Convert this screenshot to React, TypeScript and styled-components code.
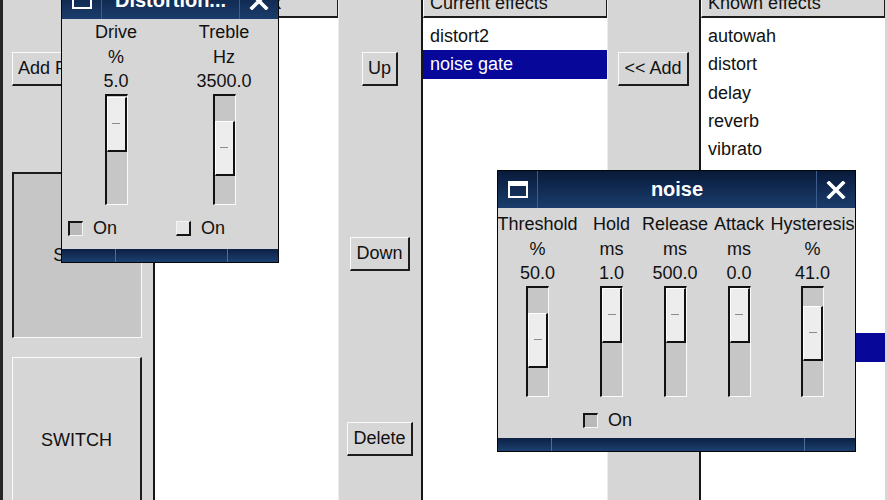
import React from "react";
import styled, { createGlobalStyle } from "styled-components";

const Global = createGlobalStyle`
  html, body { margin: 0; padding: 0; background: #d6d6d6; overflow: hidden; }
  body { font-family: "Liberation Sans", Arial, sans-serif; font-size: 18px; color: #111; }
  * { box-sizing: border-box; }
`;

const Screen = styled.div`
  position: relative;
  width: 888px;
  height: 500px;
  overflow: hidden;
  background: #d6d6d6;
`;

const MainRow = styled.div`
  display: flex;
  height: 540px;
  margin-top: -11px;
  border-left: 3px solid #262626;
`;

const LeftCol = styled.div`
  width: 150px;
  display: flex;
  flex-direction: column;
  align-items: flex-start;
  padding-left: 9px;
`;

const GrayCol = styled.div<{ $w: number }>`
  width: ${(p) => p.$w}px;
  display: flex;
  flex-direction: column;
  align-items: center;
  padding-top: 63px;
  gap: 151px;
  border-left: 1px solid #ececec;
`;

const Btn = styled.div<{ $mt?: number }>`
  height: 34px;
  margin-top: ${(p) => p.$mt ?? 0}px;
  padding: 0 5px;
  line-height: 31px;
  white-space: nowrap;
  background: #d6d6d6;
  border-style: solid;
  border-width: 1px 2px 2px 1px;
  border-color: #fafafa #1c1c1c #1c1c1c #fafafa;
`;

const BigToggle = styled.div<{ $pressed?: boolean; $mt: number; $h: number }>`
  width: 130px;
  height: ${(p) => p.$h}px;
  margin-top: ${(p) => p.$mt}px;
  display: flex;
  align-items: center;
  justify-content: center;
  background: ${(p) => (p.$pressed ? "#c6c6c6" : "#d6d6d6")};
  border-style: solid;
  border-width: ${(p) => (p.$pressed ? "2px 1px 1px 2px" : "1px 2px 2px 1px")};
  border-color: ${(p) =>
    p.$pressed ? "#1c1c1c #fafafa #fafafa #1c1c1c" : "#fafafa #1c1c1c #1c1c1c #fafafa"};
`;

const ListBox = styled.div<{ $w: number }>`
  width: ${(p) => p.$w}px;
  display: flex;
  flex-direction: column;
  background: #fff;
  border-left: 2px solid #161616;
`;

const ListHeader = styled.div`
  height: 29px;
  flex: none;
  display: flex;
  align-items: center;
  padding-left: 6px;
  white-space: nowrap;
  overflow: hidden;
  background: #d6d6d6;
  border-style: solid;
  border-width: 1px 1px 2px 1px;
  border-color: #fafafa #1c1c1c #1c1c1c #fafafa;
`;

const ListBody = styled.div`
  padding-top: 4px;
  display: flex;
  flex-direction: column;
`;

const ListItem = styled.div<{ $sel?: boolean }>`
  height: 28.3px;
  line-height: 28.3px;
  padding-left: 7px;
  white-space: nowrap;
  background: ${(p) => (p.$sel ? "#07079a" : "transparent")};
  color: ${(p) => (p.$sel ? "#fff" : "#111")};
`;

const RightGap = styled.div`
  width: 3px;
`;

/* ---------- floating windows ---------- */

const Win = styled.div<{ $x: number; $y: number; $w: number }>`
  position: absolute;
  left: ${(p) => p.$x}px;
  top: ${(p) => p.$y}px;
  width: ${(p) => p.$w}px;
  display: flex;
  flex-direction: column;
  border: 1px solid #050505;
  background: #d6d6d6;
`;

const TitleBar = styled.div`
  height: 37px;
  display: flex;
  color: #fff;
  background: linear-gradient(#091a3a, #1a3d6c);
`;

const TitleIconCell = styled.div`
  width: 40px;
  display: flex;
  align-items: center;
  justify-content: center;
  border-right: 1px solid #3d5e8c;
`;

const TitleText = styled.div`
  flex: 1;
  text-align: center;
  font-weight: bold;
  font-size: 20px;
  line-height: 37px;
  white-space: nowrap;
  overflow: hidden;
`;

const CloseCell = styled.div`
  width: 39px;
  display: flex;
  align-items: center;
  justify-content: center;
  border-left: 1px solid #3d5e8c;
`;

const WinBody = styled.div<{ $cols: string; $pt: number }>`
  height: 230px;
  display: grid;
  grid-template-columns: ${(p) => p.$cols};
  grid-template-rows: auto auto;
  align-content: start;
  padding-top: ${(p) => p.$pt}px;
`;

const ParamCol = styled.div`
  display: flex;
  flex-direction: column;
  align-items: center;
  min-width: 0;
`;

const ParamLine = styled.div`
  height: 24.5px;
  line-height: 24.5px;
  white-space: nowrap;
`;

const Trough = styled.div`
  margin-top: 0;
  width: 23px;
  height: 111px;
  display: flex;
  flex-direction: column;
  background: #c6c6c6;
  border-style: solid;
  border-width: 2px 1px 1px 2px;
  border-color: #111 #fafafa #fafafa #111;
`;

const Thumb = styled.div<{ $off: number }>`
  margin-top: ${(p) => p.$off}px;
  height: 55px;
  display: flex;
  align-items: center;
  justify-content: center;
  background: #ededed;
  border-style: solid;
  border-width: 1px 2px 2px 1px;
  border-color: #fff #111 #111 #fff;
`;

const Grip = styled.div`
  width: 8px;
  height: 1px;
  background: #8c8c8c;
`;

const CheckCell = styled.div<{ $col?: number }>`
  grid-column: ${(p) => p.$col ?? "auto"};
  grid-row: 2;
  margin-top: 12px;
  height: 24px;
  padding-left: 6px;
  display: flex;
  align-items: center;
  gap: 10px;
`;

const CheckBox = styled.div<{ $on?: boolean }>`
  width: 15px;
  height: 15px;
  background: ${(p) => (p.$on ? "#b9b9b9" : "#e6e6e6")};
  border-style: solid;
  border-width: ${(p) => (p.$on ? "2px 1px 1px 2px" : "1px 2px 2px 1px")};
  border-color: ${(p) =>
    p.$on ? "#151515 #f4f4f4 #f4f4f4 #151515" : "#f4f4f4 #151515 #151515 #f4f4f4"};
`;

const BottomBar = styled.div`
  height: 13px;
  display: flex;
  background: linear-gradient(#0c2044, #1c406e);
`;

const BarSeg = styled.div<{ $w?: number }>`
  width: ${(p) => (p.$w ? `${p.$w}px` : "auto")};
  flex: ${(p) => (p.$w ? "none" : 1)};
  & + & {
    border-left: 1px solid #4a6d9c;
  }
`;

const WinIcon = () => (
  <svg width="20" height="17" viewBox="0 0 20 17">
    <rect x="1" y="1" width="18" height="15" fill="none" stroke="#fff" strokeWidth="2" />
    <rect x="0" y="0" width="20" height="5" fill="#fff" />
  </svg>
);

const CloseIcon = () => (
  <svg width="20" height="18" viewBox="0 0 20 18">
    <path d="M3 2 L17 16 M17 2 L3 16" stroke="#fff" strokeWidth="3.6" strokeLinecap="square" />
  </svg>
);

type Param = { label: string; unit: string; value: string; off: number };

const Slider = ({ off }: { off: number }) => (
  <Trough>
    <Thumb $off={off}>
      <Grip />
    </Thumb>
  </Trough>
);

const ParamColumn = ({ p }: { p: Param }) => (
  <ParamCol>
    <ParamLine>{p.label}</ParamLine>
    <ParamLine>{p.unit}</ParamLine>
    <ParamLine>{p.value}</ParamLine>
    <Slider off={p.off} />
  </ParamCol>
);

const FxWindow = ({
  x,
  y,
  w,
  title,
  children,
}: {
  x: number;
  y: number;
  w: number;
  title: string;
  children: React.ReactNode;
}) => (
  <Win $x={x} $y={y} $w={w}>
    <TitleBar>
      <TitleIconCell>
        <WinIcon />
      </TitleIconCell>
      <TitleText>{title}</TitleText>
      <CloseCell>
        <CloseIcon />
      </CloseCell>
    </TitleBar>
    {children}
    <BottomBar>
      <BarSeg $w={53} />
      <BarSeg />
      <BarSeg $w={51} />
    </BottomBar>
  </Win>
);

const distParams: Param[] = [
  { label: "Drive", unit: "%", value: "5.0", off: 1 },
  { label: "Treble", unit: "Hz", value: "3500.0", off: 25 },
];

const noiseParams: Param[] = [
  { label: "Threshold", unit: "%", value: "50.0", off: 25 },
  { label: "Hold", unit: "ms", value: "1.0", off: 0 },
  { label: "Release", unit: "ms", value: "500.0", off: 0 },
  { label: "Attack", unit: "ms", value: "0.0", off: 0 },
  { label: "Hysteresis", unit: "%", value: "41.0", off: 18 },
];

const current = ["distort2", "noise gate"];
const known = [
  "autowah",
  "distort",
  "delay",
  "reverb",
  "vibrato",
  "chorus",
  "flanger",
  "phaser",
  "tremolo",
  "echo",
  "compressor",
  "noise gate",
  "tubeamp",
];

export default function App() {
  return (
    <Screen>
      <Global />
      <MainRow>
        <LeftCol>
          <Btn $mt={63}>Add FX</Btn>
          <BigToggle $pressed $mt={86} $h={166}>
            STOP
          </BigToggle>
          <BigToggle $mt={19} $h={168}>
            SWITCH
          </BigToggle>
        </LeftCol>

        <ListBox $w={185}>
          <ListHeader>Presets in rack</ListHeader>
          <ListBody />
        </ListBox>

        <GrayCol $w={83}>
          <Btn>Up</Btn>
          <Btn>Down</Btn>
          <Btn>Delete</Btn>
        </GrayCol>

        <ListBox $w={186}>
          <ListHeader>Current effects</ListHeader>
          <ListBody>
            {current.map((c, i) => (
              <ListItem key={c} $sel={i === 1}>
                {c}
              </ListItem>
            ))}
          </ListBody>
        </ListBox>

        <GrayCol $w={92}>
          <Btn>&lt;&lt; Add</Btn>
        </GrayCol>

        <ListBox $w={186}>
          <ListHeader>Known effects</ListHeader>
          <ListBody>
            {known.map((k, i) => (
              <ListItem key={k + i} $sel={i === 11}>
                {k}
              </ListItem>
            ))}
          </ListBody>
        </ListBox>
        <RightGap />
      </MainRow>

      <FxWindow x={61} y={-19} w={218} title="Distortion...">
        <WinBody $cols="108px 108px" $pt={1}>
          {distParams.map((p) => (
            <ParamColumn key={p.label} p={p} />
          ))}
          <CheckCell $col={1}>
            <CheckBox $on />
            On
          </CheckCell>
          <CheckCell $col={2}>
            <CheckBox />
            On
          </CheckCell>
        </WinBody>
      </FxWindow>

      <FxWindow x={497} y={170} w={359} title="noise">
        <WinBody $cols="79px 69px 58px 70px 77px" $pt={4}>
          {noiseParams.map((p) => (
            <ParamColumn key={p.label} p={p} />
          ))}
          <CheckCell $col={2}>
            <CheckBox $on />
            On
          </CheckCell>
        </WinBody>
      </FxWindow>
    </Screen>
  );
}
